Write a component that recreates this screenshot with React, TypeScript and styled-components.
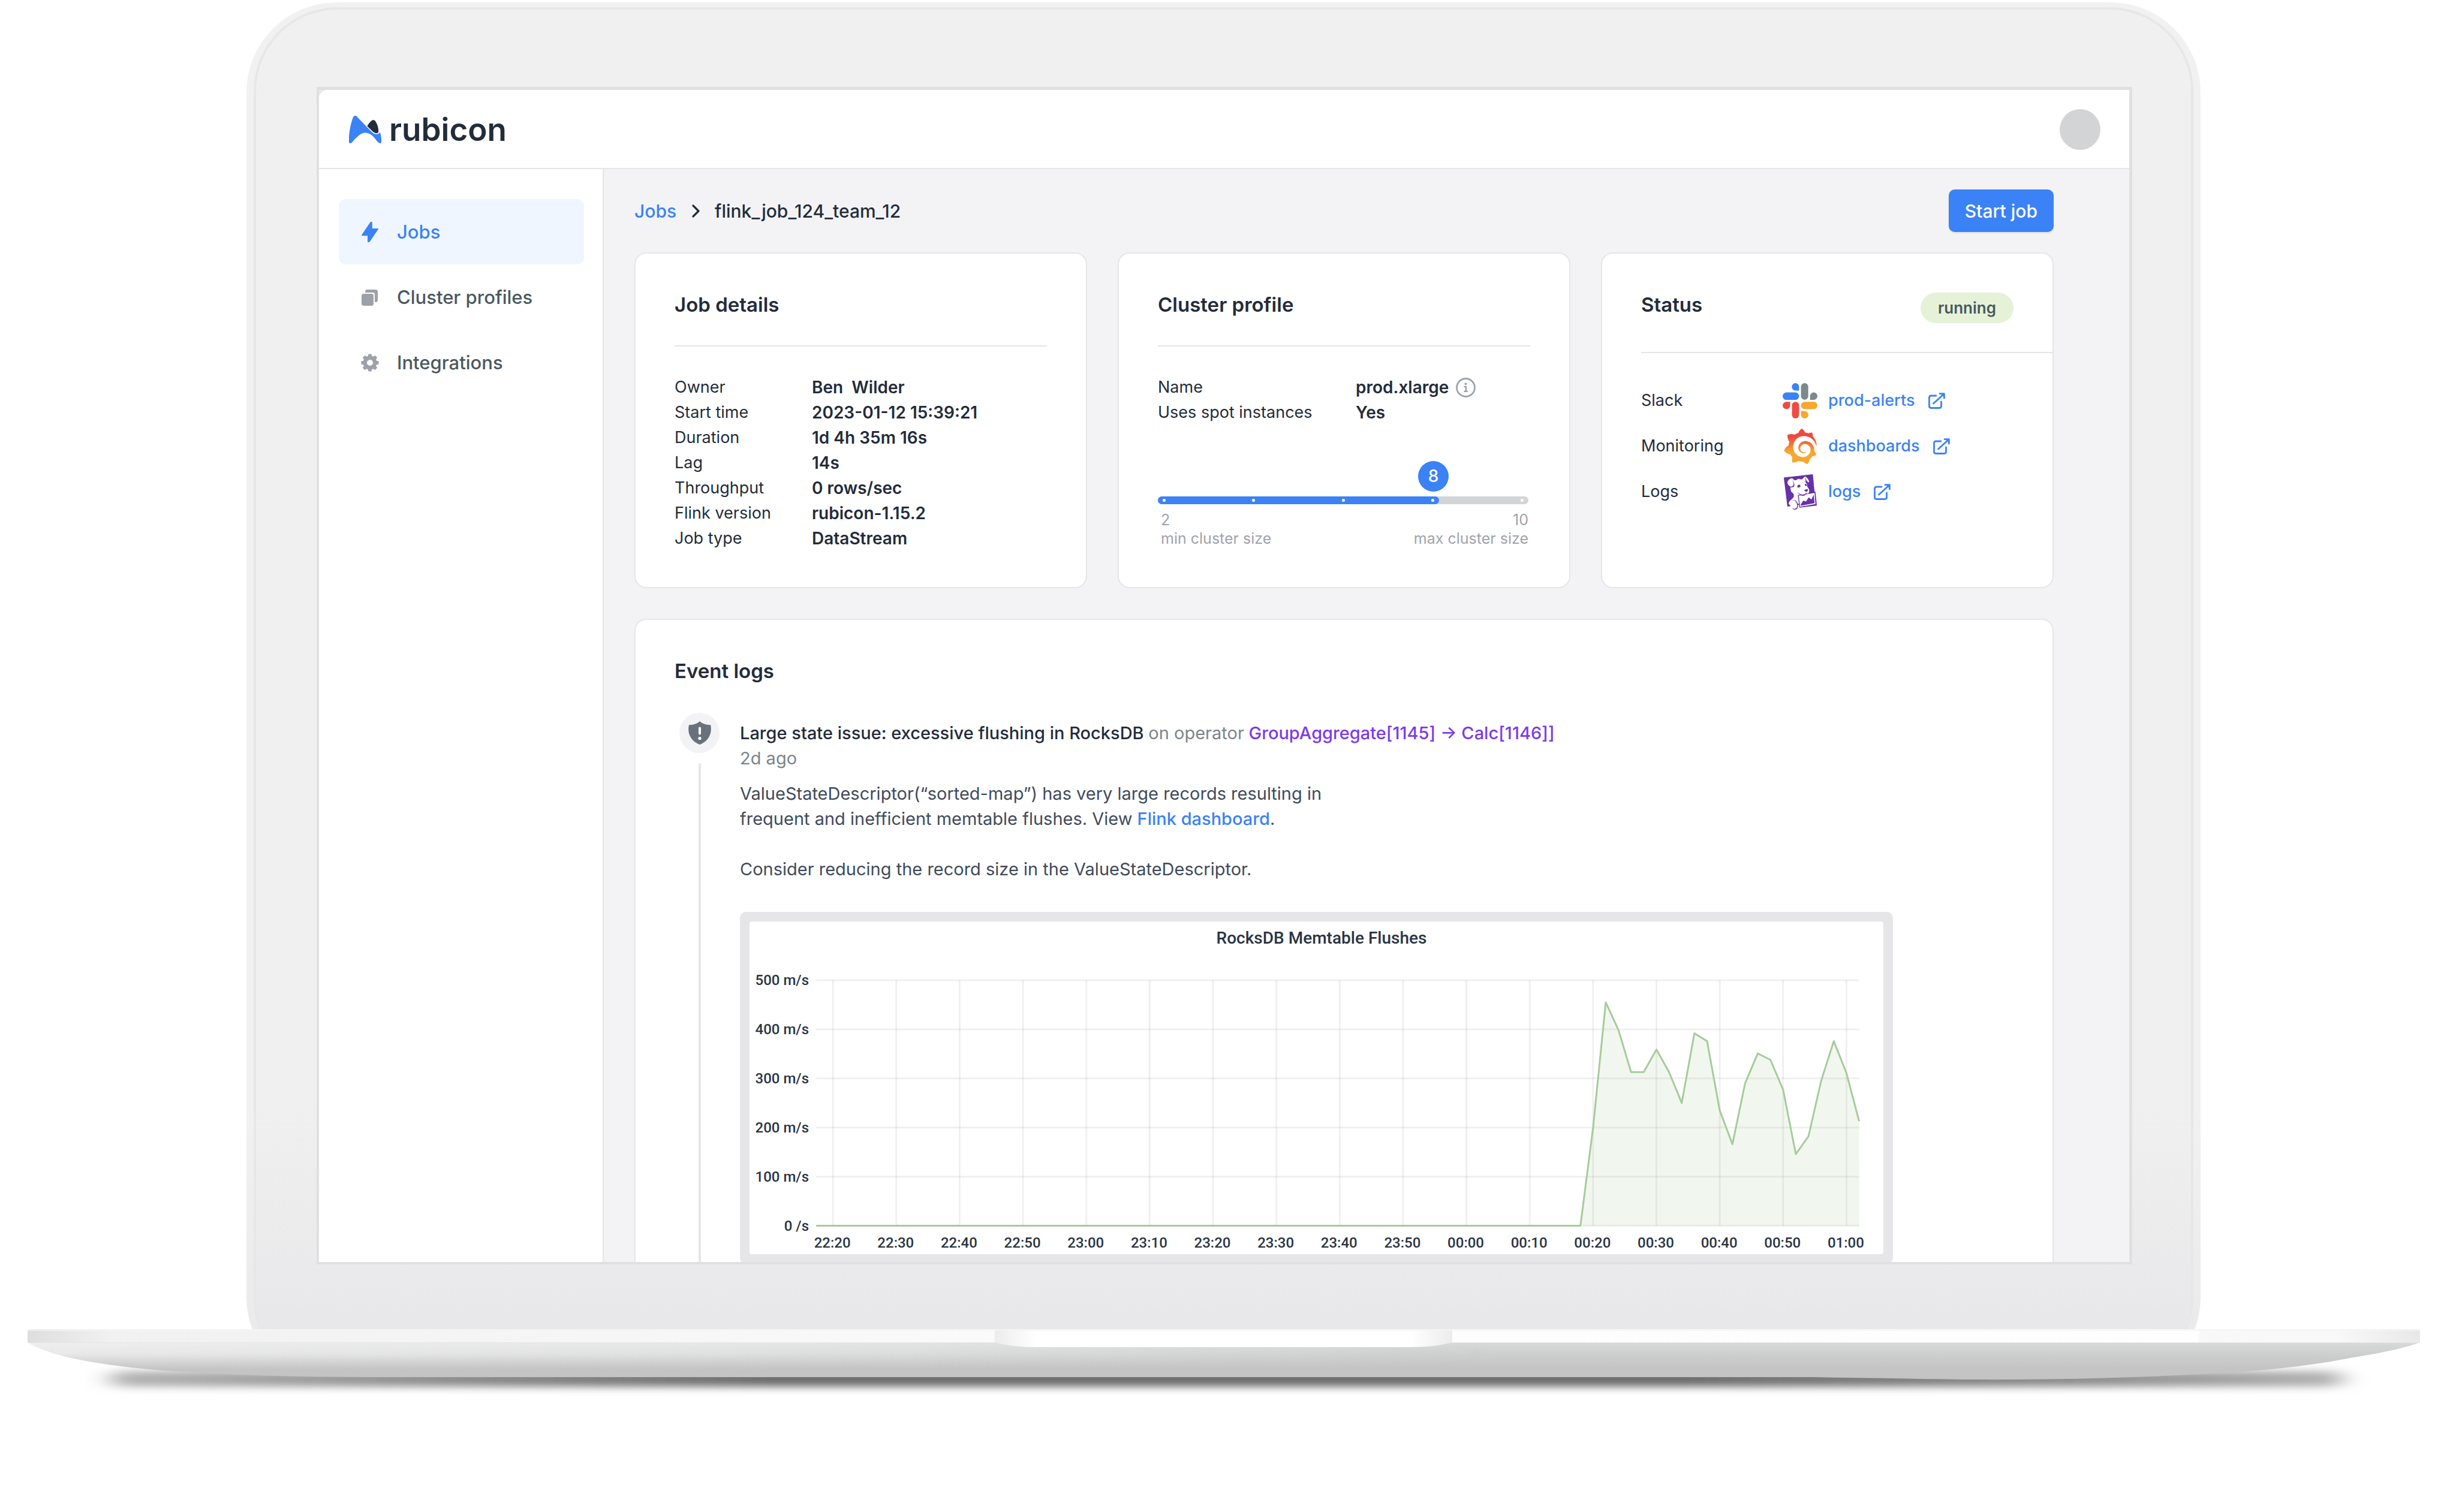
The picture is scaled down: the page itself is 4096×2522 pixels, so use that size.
import React, { useState } from "react";
import styled, { createGlobalStyle } from "styled-components";
import { SiDatadog, SiGrafana } from "react-icons/si";

const color = {
  blue: "#3b82f6",
  ink: "#232c3a",
  text: "#404b5a",
  nav: "#4b5860",
  muted: "#7b8589",
  faint: "#9fa3ab",
  line: "#e6e6e7",
  canvas: "#f3f3f6",
  purple: "#7c3aed",
};

const GlobalStyle = createGlobalStyle`
  *, *::before, *::after { box-sizing: border-box; }
  body {
    margin: 0;
    background: #fff;
    color: ${color.ink};
    font-family: Inter, "Liberation Sans", sans-serif;
    font-size: 28px;
    line-height: 42px;
  }
  h1, h2, h3, p, dl, dd, ul, figure { margin: 0; padding: 0; }
  a { color: ${color.blue}; text-decoration: none; }
  svg { display: block; flex: none; }
`;

/* ---------- laptop ---------- */

const Stage = styled.div`
  padding-top: 4px;
  overflow: hidden;
`;

const LidClip = styled.div`
  margin: 0 426px 0 411px;
  overflow: hidden;
`;

const Shell = styled.div`
  margin-bottom: -97px;
  padding: 8px 12px;
  border-radius: 150px;
  background: linear-gradient(#f1f1f1 80%, #ebebec 94%);
`;

const Bezel = styled.div`
  padding: 129px 98px 193px 101px;
  border: 4px solid #e6e7e8;
  border-radius: 140px;
  background: linear-gradient(#f0f0f0 80%, #e8e8ea 96%);
`;

const Screen = styled.div`
  display: flex;
  flex-direction: column;
  aspect-ratio: 3028 / 1964;
  border: solid #e0e0e0;
  border-width: 5px 5px 4px 4px;
  background: #e9e9e9;
  overflow: hidden;
`;

const BaseDrawing = styled.svg`
  width: 100%;
  height: auto;
`;

/* ---------- app frame ---------- */

const Header = styled.header`
  display: flex;
  flex: none;
  align-items: center;
  justify-content: space-between;
  height: 132px;
  padding: 2px 48px 0 50px;
  border-bottom: 2px solid ${color.line};
  border-radius: 14px 0 0 0;
  background: #fff;
`;

const Brand = styled.a`
  display: flex;
  align-items: center;
  gap: 13px;
  color: ${color.ink};
  font-size: 53px;
  font-weight: 600;
  line-height: 64px;
`;

const Avatar = styled.button`
  width: 68px;
  height: 68px;
  padding: 0;
  border: 0;
  border-radius: 50%;
  background: #d3d4d5;
`;

const Body = styled.div`
  display: grid;
  flex: 1;
  grid-template-columns: 475px 1fr;
  min-height: 0;
`;

const Sidebar = styled.nav`
  display: flex;
  flex-direction: column;
  padding: 50px 31px 0 33px;
  border-right: 2px solid ${color.line};
  background: #fff;
`;

const NavItem = styled.a<{ $active?: boolean }>`
  display: flex;
  align-items: center;
  gap: 30px;
  height: 109px;
  padding: 0 37px;
  border-radius: 12px;
  background: ${(p) => (p.$active ? "#eff6ff" : "transparent")};
  color: ${(p) => (p.$active ? color.blue : color.nav)};
  font-size: 31px;
  font-weight: 500;

  svg { color: ${(p) => (p.$active ? color.blue : "#9da1a9")}; }
`;

const Main = styled.main`
  min-width: 0;
  padding: 34px 126px 0 51px;
  background: ${color.canvas};
  overflow: hidden;
`;

const TopRow = styled.div`
  display: flex;
  align-items: center;
  justify-content: space-between;
  margin-bottom: 34px;
`;

const Breadcrumbs = styled.nav`
  display: flex;
  align-items: center;
  gap: 25px;
  font-size: 30px;
  font-weight: 500;
`;

const StartButton = styled.button`
  height: 71px;
  padding: 0 27px;
  border: 0;
  border-radius: 10px;
  background: ${color.blue};
  box-shadow: 0 2px 3px rgba(0, 0, 0, 0.08);
  color: #fff;
  font: inherit;
  font-size: 30px;
  font-weight: 500;
`;

/* ---------- cards ---------- */

const Cards = styled.div`
  display: grid;
  grid-template-columns: repeat(3, 1fr);
  gap: 51px;
  margin-bottom: 51px;
`;

const Card = styled.section`
  padding: 65px 65px 60px;
  border: 2px solid ${color.line};
  border-radius: 20px;
  background: #fff;
`;

const CardTitle = styled.h2`
  font-size: 33px;
  font-weight: 600;
  line-height: 40px;
`;

const Divider = styled.hr<{ $bleed?: boolean }>`
  height: 2px;
  margin: 48px ${(p) => (p.$bleed ? "-65px" : "0")} 0 0;
  border: 0;
  background: ${color.line};
`;

const Facts = styled.dl<{ $label: number }>`
  display: grid;
  grid-template-columns: ${(p) => p.$label}px 1fr;
  margin-top: 47px;

  dt { font-size: 27px; }

  dd {
    display: flex;
    align-items: center;
    gap: 12px;
    font-weight: 600;
    white-space: pre;
  }
`;

const StatusHead = styled.div`
  display: flex;
  align-items: flex-start;
  justify-content: space-between;
`;

const Pill = styled.span`
  padding: 5px 29px 4px;
  border-radius: 26px;
  background: #e6f2d8;
  color: #4b5860;
  font-size: 26px;
  font-weight: 600;
`;

const StatusList = styled.dl`
  display: grid;
  grid-template-columns: 235px 1fr;
  grid-auto-rows: 76px;
  align-items: center;
  margin-top: 41px;
  font-size: 27px;

  dd {
    display: flex;
    align-items: center;
    gap: 17px;
  }
`;

const ServiceLogo = styled.span`
  display: flex;
  justify-content: center;
  width: 60px;
`;

const ServiceLink = styled.a`
  display: flex;
  align-items: center;
  gap: 22px;
  font-weight: 500;
`;

const GrafanaLogo = styled(SiGrafana)`
  && { fill: url(#grafana-fill); }
`;

/* ---------- slider ---------- */

const SliderField = styled.div`
  margin: 60px 3px 0 0;
`;

const BubbleRail = styled.div`
  display: flex;
  padding: 0 11px;
`;

const Bubble = styled.output`
  width: 51px;
  height: 51px;
  margin-left: -24px;
  border-radius: 50%;
  background: ${color.blue};
  color: #fff;
  font-weight: 500;
  line-height: 51px;
  text-align: center;
`;

const Track = styled.div`
  display: grid;
  height: 13px;
  margin-top: 8px;
  border-radius: 7px;
  background: #d3d4d5;

  > * { grid-area: 1 / 1; }
`;

const Fill = styled.span`
  border-radius: 7px;
  background: ${color.blue};
`;

const Ticks = styled.span`
  display: flex;
  align-items: center;
  justify-content: space-between;
  padding: 0 8px;

  i {
    width: 5px;
    height: 5px;
    border-radius: 50%;
    background: #fff;
  }
`;

const Range = styled.input`
  width: 100%;
  height: 13px;
  margin: 0;
  appearance: none;
  background: transparent;

  &::-webkit-slider-thumb {
    width: 21px;
    height: 13px;
    appearance: none;
    background: transparent;
  }
`;

const Scale = styled.div`
  display: flex;
  justify-content: space-between;
  margin: 11px 0 0 5px;
  color: ${color.faint};
  font-size: 25px;
  line-height: 31px;

  > :last-child { text-align: right; }
`;

const ScaleEnd = styled.label`
  display: flex;
  flex-direction: column;
`;

/* ---------- event log ---------- */

const Event = styled.article`
  display: grid;
  grid-template-columns: 67px 1fr;
  gap: 34px;
  margin: 50px 0 0 8px;
`;

const Rail = styled.div`
  display: flex;
  flex-direction: column;
  align-items: center;
  gap: 17px;
`;

const EventBadge = styled.span`
  display: flex;
  flex: none;
  align-items: center;
  justify-content: center;
  width: 67px;
  height: 67px;
  border-radius: 50%;
  background: ${color.canvas};
`;

const RailLine = styled.span`
  flex: 1;
  width: 4px;
  background: ${color.line};
`;

const EventBody = styled.div`
  padding: 13px 201px 0 0;
  color: ${color.text};
  font-size: 29px;
`;

const EventTitle = styled.h3`
  color: ${color.ink};
  font-size: 29px;
  font-weight: 500;

  span { color: ${color.muted}; font-weight: 400; }
  a { color: ${color.purple}; }
`;

const EventAge = styled.p`
  margin-bottom: 17px;
  color: ${color.muted};
`;

const EventText = styled.p`
  max-width: 1040px;
  margin-bottom: 42px;

  a { font-weight: 500; }
`;

const ChartFrame = styled.figure`
  margin-top: 50px;
  padding: 16px;
  border-radius: 10px;
  background: #e6e6e8;
`;

const ChartDrawing = styled.svg`
  width: 100%;
  height: auto;
  border-radius: 4px;
  background: #fff;
  font-family: Roboto, "Liberation Sans", sans-serif;
  font-size: 24px;
  font-weight: 500;
  fill: #2a3443;
`;

/* ---------- icons ---------- */

const LogoMark = () => (
  <svg width="54" height="46" viewBox="0 0 54 46" aria-hidden="true">
    <path
      fill={color.blue}
      d="M2 46C.5 46 0 45 0 43V34C1 22 3.500 12 6.300 4C7.500.8 9 0 11 0C12.500 0 13.300 1.200 14.200 2.600L28.500 17.500L38 27C41 30 43.500 31 46 30.800C49 30.500 51 29.500 51.600 27C53 31 54 36 54 40V44C54 46 52 46.500 50.500 45.500C49 44.500 47.500 43.500 46 41.500C43 37 40 34 36.600 31.500C30 27.500 23 27.500 17 32.500C13 35.800 9 39.500 6 43.500C4.800 45.200 3.500 46 2 46Z"
    />
    <path
      fill={color.ink}
      d="M30.400 17.500C32.500 13.500 35 10.500 37.500 8.500C39.500 7 42.500 6.800 44 9C47.500 14 49 20 49.300 25.500C49.300 29 46.500 29.800 44 29C42 28.300 40.500 27 39 25.800Z"
    />
  </svg>
);

const BoltIcon = () => (
  <svg width="30" height="36" viewBox="-1 -1 30 36" aria-hidden="true">
    <path
      fill="currentColor"
      stroke="currentColor"
      strokeWidth="2"
      strokeLinejoin="round"
      d="M15.500 1L16.800 1V12H27L12.500 33L11 33V22.300H1Z"
    />
  </svg>
);

const StackIcon = () => (
  <svg width="30" height="28" viewBox="0 0 30 28" aria-hidden="true">
    <rect x="1" y="8" width="20" height="20" rx="3.500" fill="currentColor" />
    <path
      fill="currentColor"
      d="M7 6V4.500A3.500 3.500 0 0 1 10.500 1H24.500A3.500 3.500 0 0 1 28 4.500V18.500A3.500 3.500 0 0 1 24.500 22H23V9.500A3.500 3.500 0 0 0 19.500 6Z"
    />
  </svg>
);

const gearPath = (() => {
  const points: string[] = [];
  for (let tooth = 0; tooth < 8; tooth++) {
    [
      [-14, 10.8],
      [-8, 14],
      [8, 14],
      [14, 10.8],
    ].forEach(([shift, radius]) => {
      const angle = ((tooth * 45 + shift) * Math.PI) / 180;
      points.push(
        `${(15 + radius * Math.sin(angle)).toFixed(2)} ${(15 - radius * Math.cos(angle)).toFixed(2)}`
      );
    });
  }
  return `M${points.join("L")}ZM15 9.200A5.800 5.800 0 1 0 15 20.800A5.800 5.800 0 1 0 15 9.200Z`;
})();

const GearIcon = () => (
  <svg width="30" height="30" viewBox="0 0 30 30" aria-hidden="true">
    <path
      fill="currentColor"
      fillRule="evenodd"
      stroke="currentColor"
      strokeWidth="1.500"
      strokeLinejoin="round"
      d={gearPath}
    />
  </svg>
);

const ChevronIcon = () => (
  <svg width="14" height="22" viewBox="0 0 14 22" aria-hidden="true">
    <path
      d="M3 2L12 11L3 20"
      fill="none"
      stroke={color.ink}
      strokeWidth="3.200"
      strokeLinecap="round"
      strokeLinejoin="round"
    />
  </svg>
);

const InfoIcon = () => (
  <svg width="33" height="33" viewBox="0 0 33 33" role="img" aria-label="Profile info">
    <circle cx="16.500" cy="16.500" r="15" fill="none" stroke="#9ca3af" strokeWidth="2.800" />
    <circle cx="16.500" cy="10.300" r="2" fill="#9ca3af" />
    <path
      d="M14.500 15H16.800V22.500M14.500 22.800H18.800"
      fill="none"
      stroke="#9ca3af"
      strokeWidth="2.400"
      strokeLinecap="round"
    />
  </svg>
);

const ExternalIcon = () => (
  <svg width="28" height="27" viewBox="0 0 28 27" aria-hidden="true">
    <g
      fill="none"
      stroke="currentColor"
      strokeWidth="2.800"
      strokeLinecap="round"
      strokeLinejoin="round"
    >
      <path d="M13 5H4.500Q1.500 5 1.500 8V22.500Q1.500 25.500 4.500 25.500H18.500Q21.500 25.500 21.500 22.500V15" />
      <path d="M8.500 18L25 3" />
      <path d="M19 1.600H26.400V9" />
    </g>
    <path d="M20 1.500H26.500V8Z" fill="currentColor" />
  </svg>
);

const SlackLogo = () => (
  <svg width="58" height="59" viewBox="0 0 231 235" aria-hidden="true">
    <g fill="#3b82f6">
      <rect y="62" width="109" height="50" rx="25" />
      <path d="M109 50H86A24 25 0 1 1 109 25Z" />
    </g>
    <g fill="#7d898c">
      <rect x="122" width="48" height="111" rx="24" />
      <path d="M182 112V87A24.500 25 0 1 1 206 112Z" />
    </g>
    <g fill="#ef4a43">
      <rect x="62" y="124" width="47" height="111" rx="23.500" />
      <path d="M50 124V149A25 24.500 0 1 1 25 124Z" />
    </g>
    <g fill="#f5a92f">
      <rect x="122" y="124" width="109" height="49" rx="24.500" />
      <path d="M122 185H146A24.500 25 0 1 1 122 210Z" />
    </g>
  </svg>
);

const ShieldIcon = () => (
  <svg width="38" height="39" viewBox="0 0 38 39" aria-hidden="true">
    <path
      fill="#69717d"
      d="M19 0C21 2 24 4 28 5C31 5.800 34 6.200 37 6.300C37.600 8.500 37.800 11 37.800 13C37.800 25 31 34.500 19 39C7 34.500.2 25 .2 13C.2 11 .4 8.500 1 6.300C4 6.200 7 5.800 10 5C14 4 17 2 19 0Z"
    />
    <rect x="17" y="9.500" width="4" height="13" rx="2" fill="#fff" />
    <circle cx="19" cy="28.500" r="2.600" fill="#fff" />
  </svg>
);

/* ---------- chart ---------- */

const times = [
  "22:20", "22:30", "22:40", "22:50", "23:00", "23:10", "23:20", "23:30", "23:40",
  "23:50", "00:00", "00:10", "00:20", "00:30", "00:40", "00:50", "01:00",
];
const levels = ["0 /s", "100 m/s", "200 m/s", "300 m/s", "400 m/s", "500 m/s"];
/* one sample every two minutes, starting at 00:18 */
const flushes = [
  0, 200, 455, 399, 313, 313, 359, 313, 250, 392, 376, 235, 166, 290, 351, 338, 277,
  146, 182, 295, 376, 311, 213,
];
const plot = { left: 111, right: 1849, top: 98, bottom: 507, first: 139, step: 105.53 };
const timeX = (i: number) => plot.first + i * plot.step;
const valueY = (v: number) => plot.bottom - (v / 500) * (plot.bottom - plot.top);
const curve = flushes
  .map((v, i) => `${(timeX(11.8) + (i * plot.step) / 5).toFixed(1)} ${valueY(v).toFixed(1)}`)
  .join("L");

const FlushChart = () => (
  <ChartDrawing viewBox="0 0 1889 554" role="img" aria-label="RocksDB Memtable Flushes">
    <text x="953" y="37" textAnchor="middle" fontSize="28">
      RocksDB Memtable Flushes
    </text>
    <g stroke="#000" strokeOpacity="0.06" strokeWidth="3">
      {levels.map((level, i) => (
        <path key={level} d={`M${plot.left} ${valueY(i * 100)}H${plot.right}`} />
      ))}
      {times.map((time, i) => (
        <path key={time} d={`M${timeX(i)} ${plot.top}V${plot.bottom}`} />
      ))}
    </g>
    <path
      d={`M${curve}L${plot.right} ${plot.bottom}Z`}
      fill="#7eb26d"
      fillOpacity="0.11"
    />
    <path
      d={`M${plot.left} ${plot.bottom}L${curve}`}
      fill="none"
      stroke="#a7cb9c"
      strokeWidth="3"
      strokeLinejoin="round"
    />
    {levels.map((level, i) => (
      <text key={level} x="99" y={valueY(i * 100) + 8} textAnchor="end">
        {level}
      </text>
    ))}
    {times.map((time, i) => (
      <text key={time} x={timeX(i) - 1} y="543" textAnchor="middle">
        {time}
      </text>
    ))}
  </ChartDrawing>
);

const LaptopBase = () => (
  <BaseDrawing viewBox="0 0 4096 305" aria-hidden="true">
    <defs>
      <linearGradient id="strip" gradientUnits="userSpaceOnUse" x1="46" x2="4036" y1="0" y2="0">
        <stop offset="0" stopColor="#dedede" />
        <stop offset="0.035" stopColor="#f1f1f1" />
        <stop offset="0.4" stopColor="#fafafa" />
        <stop offset="0.6" stopColor="#fdfdfd" />
        <stop offset="0.907" stopColor="#fefefe" />
        <stop offset="0.908" stopColor="#f8f8f8" />
        <stop offset="0.964" stopColor="#f9f9f9" />
        <stop offset="1" stopColor="#e8e8e8" />
      </linearGradient>
      <linearGradient id="under" x1="0" x2="0" y1="0" y2="1">
        <stop offset="0" stopColor="#d8dada" />
        <stop offset="0.35" stopColor="#cccecd" />
        <stop offset="0.7" stopColor="#c4c4c4" />
        <stop offset="1" stopColor="#c3c3c3" />
      </linearGradient>
      <linearGradient id="sheen" gradientUnits="userSpaceOnUse" x1="0" x2="0" y1="23" y2="68">
        <stop offset="0" stopColor="#eeeeee" />
        <stop offset="0.4" stopColor="#ebebeb" stopOpacity="0.9" />
        <stop offset="1" stopColor="#e0e0e0" stopOpacity="0" />
      </linearGradient>
      <linearGradient id="sheen-fade" gradientUnits="userSpaceOnUse" x1="46" x2="2500" y1="0" y2="0">
        <stop offset="0" stopColor="#fff" />
        <stop offset="0.4" stopColor="#bbb" />
        <stop offset="1" stopColor="#000" />
      </linearGradient>
      <mask id="sheen-mask">
        <rect width="4096" height="100" fill="url(#sheen-fade)" />
      </mask>
      <linearGradient id="notch" x1="0" x2="1" y1="0" y2="0">
        <stop offset="0" stopColor="#ececec" />
        <stop offset="0.09" stopColor="#fff" />
        <stop offset="0.91" stopColor="#fff" />
        <stop offset="1" stopColor="#ececec" />
      </linearGradient>
      <linearGradient id="shade" gradientUnits="userSpaceOnUse" x1="170" x2="3920" y1="0" y2="0">
        <stop offset="0" stopColor="#b5b5b5" />
        <stop offset="0.15" stopColor="#8c8c8c" />
        <stop offset="0.3" stopColor="#6a6a6a" />
        <stop offset="0.7" stopColor="#6a6a6a" />
        <stop offset="0.88" stopColor="#8c8c8c" />
        <stop offset="1" stopColor="#b5b5b5" />
      </linearGradient>
      <filter id="soft" x="-5%" y="-150%" width="110%" height="400%">
        <feGaussianBlur stdDeviation="22 7" />
      </filter>
      <linearGradient id="grafana-fill" x1="0" x2="0" y1="0" y2="1">
        <stop offset="0.25" stopColor="#ef4a3f" />
        <stop offset="0.65" stopColor="#f5a92f" />
      </linearGradient>
    </defs>
    <rect x="184" y="70" width="3722" height="26" rx="13" fill="url(#shade)" filter="url(#soft)" />
    <path
      fill="url(#under)"
      d="M46 22C70 36 110 48 161 56C220 66 290 71 358 74C440 78 520 80 609 80H3000C3150 81 3250 85 3364 84C3490 83 3610 79 3724 72C3800 67 3870 58 3920 48C3970 40 4010 32 4036 22Z"
    />
    <path
      mask="url(#sheen-mask)"
      fill="url(#sheen)"
      d="M46 22C70 36 110 48 161 56C220 66 290 71 358 74C440 78 520 80 609 80H2500V22Z"
    />
    <rect x="46" width="3990" height="23" fill="url(#strip)" />
    <rect x="46" y="22" width="3990" height="1" fill="#e6e6e6" />
    <path d="M1659 0H2422V22C2405 27 2380 30 2350 30H1730C1700 30 1676 27 1659 22Z" fill="url(#notch)" />
    <rect x="46" width="3990" height="3" fill="#f4f4f4" fillOpacity="0.7" />
  </BaseDrawing>
);

/* ---------- page ---------- */

const jobFacts = [
  ["Owner", "Ben  Wilder"],
  ["Start time", "2023-01-12 15:39:21"],
  ["Duration", "1d 4h 35m 16s"],
  ["Lag", "14s"],
  ["Throughput", "0 rows/sec"],
  ["Flink version", "rubicon-1.15.2"],
  ["Job type", "DataStream"],
];

const services = [
  { name: "Slack", link: "prod-alerts", logo: <SlackLogo /> },
  { name: "Monitoring", link: "dashboards", logo: <GrafanaLogo size={59} /> },
  { name: "Logs", link: "logs", logo: <SiDatadog size={59} color="#6631a8" /> },
];

const ClusterSlider = () => {
  const [size, setSize] = useState(8);
  const share = (size - 2) / 8;
  return (
    <SliderField>
      <BubbleRail>
        <span style={{ width: `${share * 100}%` }} />
        <Bubble htmlFor="cluster-size">{size}</Bubble>
      </BubbleRail>
      <Track>
        <Fill style={{ width: `calc(21px + (100% - 21px) * ${share})` }} />
        <Ticks>
          {[2, 4, 6, 8, 10].map((tick) => (
            <i key={tick} />
          ))}
        </Ticks>
        <Range
          id="cluster-size"
          type="range"
          min={2}
          max={10}
          step={2}
          value={size}
          onChange={(e) => setSize(Number(e.target.value))}
        />
      </Track>
      <Scale>
        <ScaleEnd htmlFor="cluster-size">
          <span>2</span>
          <span>min cluster size</span>
        </ScaleEnd>
        <ScaleEnd htmlFor="cluster-size">
          <span>10</span>
          <span>max cluster size</span>
        </ScaleEnd>
      </Scale>
    </SliderField>
  );
};

export default function App() {
  return (
    <Stage>
      <GlobalStyle />
      <LidClip>
        <Shell>
          <Bezel>
            <Screen>
              <Header>
                <Brand href="#">
                  <LogoMark />
                  rubicon
                </Brand>
                <Avatar type="button" aria-label="Account" />
              </Header>
              <Body>
                <Sidebar aria-label="Main">
                  <NavItem href="#jobs" $active>
                    <BoltIcon />
                    Jobs
                  </NavItem>
                  <NavItem href="#profiles">
                    <StackIcon />
                    Cluster profiles
                  </NavItem>
                  <NavItem href="#integrations">
                    <GearIcon />
                    Integrations
                  </NavItem>
                </Sidebar>
                <Main>
                  <TopRow>
                    <Breadcrumbs aria-label="Breadcrumb">
                      <a href="#jobs">Jobs</a>
                      <ChevronIcon />
                      <span>flink_job_124_team_12</span>
                    </Breadcrumbs>
                    <StartButton type="button">Start job</StartButton>
                  </TopRow>
                  <Cards>
                    <Card>
                      <CardTitle>Job details</CardTitle>
                      <Divider />
                      <Facts $label={229}>
                        {jobFacts.map(([label, value]) => (
                          <React.Fragment key={label}>
                            <dt>{label}</dt>
                            <dd>{value}</dd>
                          </React.Fragment>
                        ))}
                      </Facts>
                    </Card>
                    <Card>
                      <CardTitle>Cluster profile</CardTitle>
                      <Divider />
                      <Facts $label={330}>
                        <dt>Name</dt>
                        <dd>
                          prod.xlarge
                          <InfoIcon />
                        </dd>
                        <dt>Uses spot instances</dt>
                        <dd>Yes</dd>
                      </Facts>
                      <ClusterSlider />
                    </Card>
                    <Card>
                      <StatusHead>
                        <CardTitle>Status</CardTitle>
                        <Pill>running</Pill>
                      </StatusHead>
                      <Divider $bleed />
                      <StatusList>
                        {services.map(({ name, link, logo }) => (
                          <React.Fragment key={name}>
                            <dt>{name}</dt>
                            <dd>
                              <ServiceLogo>{logo}</ServiceLogo>
                              <ServiceLink href={`#${link}`}>
                                {link}
                                <ExternalIcon />
                              </ServiceLink>
                            </dd>
                          </React.Fragment>
                        ))}
                      </StatusList>
                    </Card>
                  </Cards>
                  <Card>
                    <CardTitle>Event logs</CardTitle>
                    <Event>
                      <Rail>
                        <EventBadge>
                          <ShieldIcon />
                        </EventBadge>
                        <RailLine />
                      </Rail>
                      <EventBody>
                        <EventTitle>
                          Large state issue: excessive flushing in RocksDB <span>on operator</span>{" "}
                          <a href="#operator">GroupAggregate[1145] → Calc[1146]]</a>
                        </EventTitle>
                        <EventAge>2d ago</EventAge>
                        <EventText>
                          ValueStateDescriptor(“sorted-map”) has very large records resulting in
                          frequent and inefficient memtable flushes. View{" "}
                          <a href="#flink">Flink dashboard</a>.
                        </EventText>
                        <EventText>
                          Consider reducing the record size in the ValueStateDescriptor.
                        </EventText>
                        <ChartFrame>
                          <FlushChart />
                        </ChartFrame>
                      </EventBody>
                    </Event>
                  </Card>
                </Main>
              </Body>
            </Screen>
          </Bezel>
        </Shell>
      </LidClip>
      <LaptopBase />
    </Stage>
  );
}
